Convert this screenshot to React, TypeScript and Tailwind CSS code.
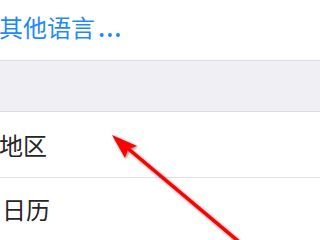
import React from "react";

export default function App() {
  const font = { fontFamily: '"Noto Sans CJK SC", "Noto Sans", sans-serif' };
  return (
    <div className="relative w-[320px] h-[240px] overflow-hidden bg-white" style={font}>
      <div className="h-[60px] flex items-center pb-[6px]">
        <span className="text-[24px] leading-[24px] text-[#1f8af5] -ml-[1px]">
          其他语言<span className="ml-[3px] tracking-[1px] font-medium">...</span>
        </span>
      </div>
      <div className="h-[52px] bg-[#efeff4] border-y border-[#dcdce0]" />
      <div className="h-[66px] flex items-center border-b border-[#e2e2e6]">
        <span className="text-[24px] leading-[24px] text-[#262626] -ml-[1px]">地区</span>
      </div>
      <div className="h-[62px] flex items-center">
        <span className="text-[24px] leading-[24px] text-[#262626] ml-[2px]">日历</span>
      </div>
      <svg
        className="absolute inset-0 pointer-events-none"
        width="320"
        height="240"
        viewBox="0 0 320 240"
        style={{ filter: "drop-shadow(1px 1px 1.5px rgba(0,0,0,0.55))" }}
      >
        <line x1="125" y1="146" x2="250" y2="251" stroke="#ff0000" strokeWidth="3.4" strokeLinecap="round" />
        <polygon points="112,135 137,146 128,149 125,158" fill="#ff0000" />
      </svg>
    </div>
  );
}
